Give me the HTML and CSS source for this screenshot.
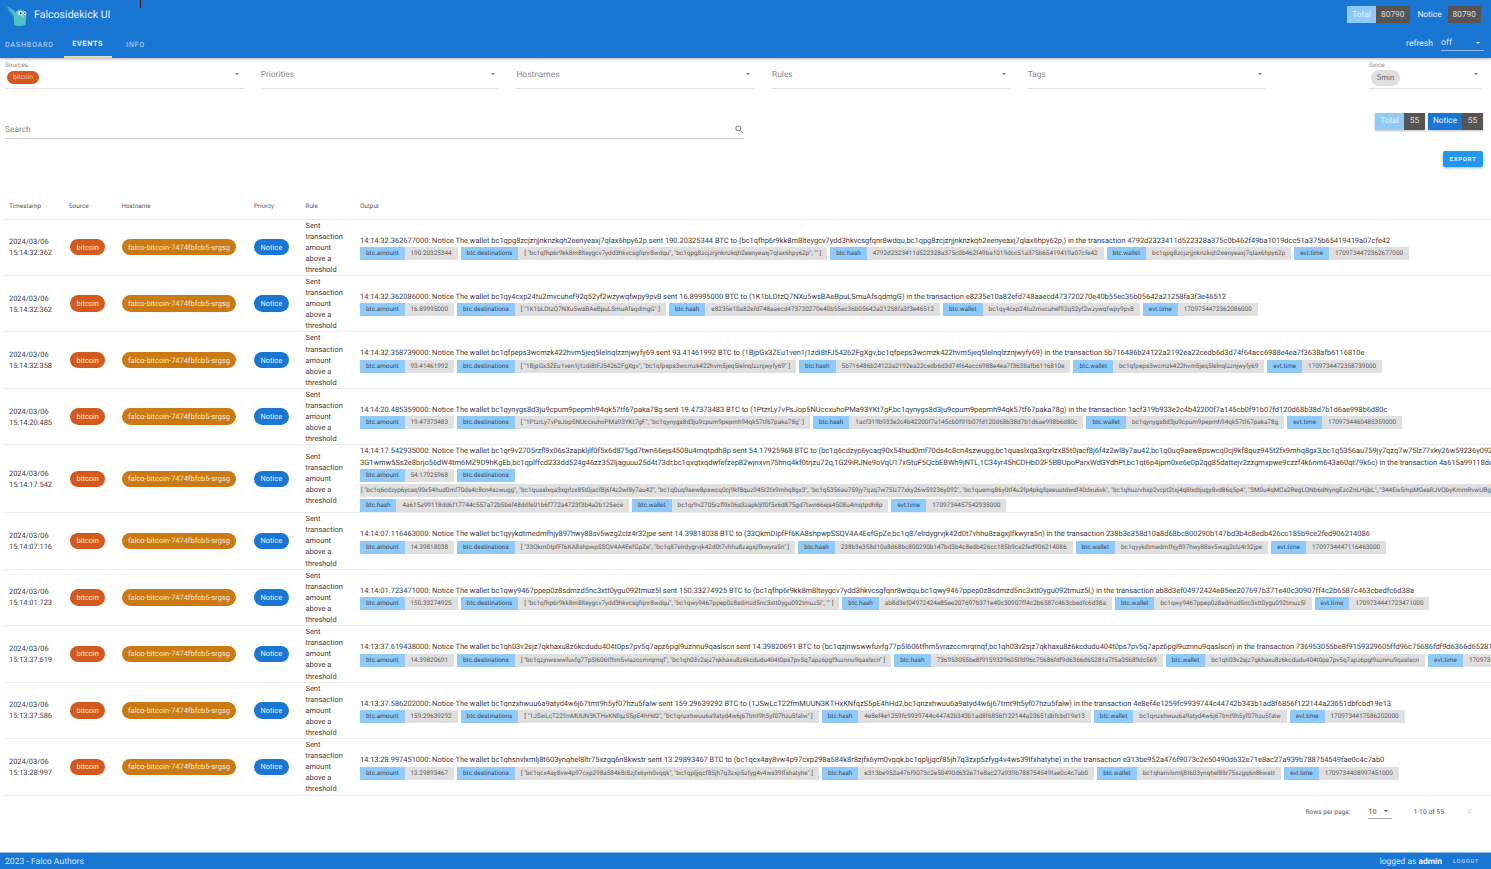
FILE: index.html
```html
<!DOCTYPE html>
<html lang="en">
<head>
<meta charset="utf-8">
<title>Falcosidekick UI</title>
<link rel="stylesheet" href="styles.css">
</head>
<body>
<div class="app">
  <i class="cursor-mark"></i>
  <header class="topbar">
    <div class="bar-row">
      <svg class="logo" viewBox="0 0 28 28" aria-hidden="true">
        <path d="M0 1 L13 9 L13 20 Q6 12 0 1Z" fill="#2a8fb5"/>
        <path d="M4 4 L13 10 L13 17 Q8 11 4 4Z" fill="#46bcd3"/>
        <path d="M12 26 Q11 16 13 12 Q15 7 20 8 Q26 9 26 15 L25 25 Q19 28 12 26Z" fill="#4fc4cc"/>
        <circle cx="19" cy="12" r="2.6" fill="#e8f4f5"/><circle cx="24" cy="12" r="2.1" fill="#e8f4f5"/>
        <circle cx="19.5" cy="12" r="1.1" fill="#234"/><circle cx="24.3" cy="12" r=".9" fill="#234"/>
        <path d="M20.5 15 L23 15 L21.8 17.5Z" fill="#d9c48d"/>
      </svg>
      <span class="brand">Falcosidekick UI</span>
      <span class="grow"></span>
      <span class="count-group">
        <span class="count-key key-light">Total</span><span class="count-val val-wide">80790</span>
      </span>
      <span class="count-key key-plain">Notice</span><span class="count-val val-wide">80790</span>
    </div>
    <div class="bar-row tabs-row">
      <nav class="tabs">
        <a class="tab tab-first">DASHBOARD</a>
        <a class="tab tab-active">EVENTS</a>
        <a class="tab tab-last">INFO</a>
      </nav>
      <span class="grow"></span>
      <span class="refresh-label">refresh</span>
      <span class="refresh-select">off<i class="caret caret-white"></i></span>
    </div>
  </header>

  <main class="main">
    <section class="filters">
      <div class="field"><span class="mini-label">Sources</span><span class="chip-small">bitcoin</span><i class="caret"></i></div>
      <div class="field"><span class="placeholder">Priorities</span><i class="caret"></i></div>
      <div class="field"><span class="placeholder">Hostnames</span><i class="caret"></i></div>
      <div class="field"><span class="placeholder">Rules</span><i class="caret"></i></div>
      <div class="field"><span class="placeholder">Tags</span><i class="caret"></i></div>
      <div class="field field-since"><span class="mini-label">Since</span><span class="chip-grey">5min</span><i class="caret"></i></div>
    </section>

    <section class="search-row">
      <div class="search">
        <span class="search-text">Search</span>
        <svg class="search-icon" viewBox="0 0 24 24" aria-hidden="true"><path d="M9.5 3A6.5 6.5 0 0 1 16 9.5c0 1.61-.59 3.09-1.56 4.23l.27.27h.79l5 5-1.5 1.5-5-5v-.79l-.27-.27A6.516 6.516 0 0 1 9.5 16 6.5 6.5 0 0 1 3 9.5 6.5 6.5 0 0 1 9.5 3m0 2C7 5 5 7 5 9.5S7 14 9.5 14 14 12 14 9.5 12 5 9.5 5z"/></svg>
      </div>
      <span class="grow"></span>
      <span class="count-group raised"><span class="count-key key-light">Total</span><span class="count-val">55</span></span>
      <span class="count-group raised"><span class="count-key key-blue">Notice</span><span class="count-val">55</span></span>
    </section>

    <div class="export-row"><button class="export">EXPORT</button></div>

    <div class="table-clip">
      <table class="events">
        <colgroup><col class="c-time"><col class="c-src"><col class="c-host"><col class="c-prio"><col class="c-rule"><col class="c-out"></colgroup>
        <thead>
          <tr><th>Timestamp</th><th>Source</th><th>Hostname</th><th>Priority</th><th>Rule</th><th>Output</th></tr>
        </thead>
        <tbody>
          <tr>
            <td>2024/03/06<br>15:14:32:362</td><td><span class="chip c-bitcoin">bitcoin</span></td><td><span class="chip c-hostn">falco-bitcoin-7474fbfcb5-srgsg</span></td><td><span class="chip c-notice">Notice</span></td><td class="rule">Sent transaction amount above a threshold</td>
            <td><div class="line">14:14:32.362677000: Notice The wallet bc1qpg8zcjzrjjnknzkqh2eenyeaxj7qlax6hpy62p sent 190.20325344 BTC to (bc1qfhp6r9kk8m8lteygcv7ydd3hkvcsgfqnr8wdqu,bc1qpg8zcjzrjjnknzkqh2eenyeaxj7qlax6hpy62p,) in the transaction 4792d2323411d522328a375c0b462f49ba1019dcc51a375b65419419a07cfe42</div>
            <div class="tags"><span class="tag"><b>btc.amount</b><em>190.20325344</em></span><span class="tag"><b>btc.destinations</b><em>[ "bc1qfhp6r9kk8m8lteygcv7ydd3hkvcsgfqnr8wdqu", "bc1qpg8zcjzrjjnknzkqh2eenyeaxj7qlax6hpy62p", "" ]</em></span><span class="tag"><b>btc.hash</b><em>4792d2323411d522328a375c0b462f49ba1019dcc51a375b65419419a07cfe42</em></span><span class="tag"><b>btc.wallet</b><em>bc1qpg8zcjzrjjnknzkqh2eenyeaxj7qlax6hpy62p</em></span><span class="tag"><b>evt.time</b><em>1709734472362677000</em></span></div></td>
          </tr>
          <tr>
            <td>2024/03/06<br>15:14:32:362</td><td><span class="chip c-bitcoin">bitcoin</span></td><td><span class="chip c-hostn">falco-bitcoin-7474fbfcb5-srgsg</span></td><td><span class="chip c-notice">Notice</span></td><td class="rule">Sent transaction amount above a threshold</td>
            <td><div class="line">14:14:32.362086000: Notice The wallet bc1qy4cxp24tu2mvcuhef92q52yf2wzywqfwpy9pv8 sent 16.89995000 BTC to (1K1bLDtzQ7NXu5wsBAeBpuLSmuAfsqdmgG) in the transaction e8235e10a82efd748aaecd473720270e40b55ec36b05642a21258fa3f3e46512</div>
            <div class="tags"><span class="tag"><b>btc.amount</b><em>16.89995000</em></span><span class="tag"><b>btc.destinations</b><em>[ "1K1bLDtzQ7NXu5wsBAeBpuLSmuAfsqdmgG" ]</em></span><span class="tag"><b>btc.hash</b><em>e8235e10a82efd748aaecd473720270e40b55ec36b05642a21258fa3f3e46512</em></span><span class="tag"><b>btc.wallet</b><em>bc1qy4cxp24tu2mvcuhef92q52yf2wzywqfwpy9pv8</em></span><span class="tag"><b>evt.time</b><em>1709734472362086000</em></span></div></td>
          </tr>
          <tr>
            <td>2024/03/06<br>15:14:32:358</td><td><span class="chip c-bitcoin">bitcoin</span></td><td><span class="chip c-hostn">falco-bitcoin-7474fbfcb5-srgsg</span></td><td><span class="chip c-notice">Notice</span></td><td class="rule">Sent transaction amount above a threshold</td>
            <td><div class="line">14:14:32.358739000: Notice The wallet bc1qfpeps3wcmzk422hvm5jeq5lelnqlzznjwyfy69 sent 93.41461992 BTC to (1BjpGx3ZEu1ven1j1zdi8tFJ54262FgXgv,bc1qfpeps3wcmzk422hvm5jeq5lelnqlzznjwyfy69) in the transaction 5b716486b24122a2192ea22cedb6d3d74f64acc6988e4ea7f3638afb6116810e</div>
            <div class="tags"><span class="tag"><b>btc.amount</b><em>93.41461992</em></span><span class="tag"><b>btc.destinations</b><em>[ "1BjpGx3ZEu1ven1j1zdi8tFJ54262FgXgv", "bc1qfpeps3wcmzk422hvm5jeq5lelnqlzznjwyfy69" ]</em></span><span class="tag"><b>btc.hash</b><em>5b716486b24122a2192ea22cedb6d3d74f64acc6988e4ea7f3638afb6116810e</em></span><span class="tag"><b>btc.wallet</b><em>bc1qfpeps3wcmzk422hvm5jeq5lelnqlzznjwyfy69</em></span><span class="tag"><b>evt.time</b><em>1709734472358739000</em></span></div></td>
          </tr>
          <tr>
            <td>2024/03/06<br>15:14:20:485</td><td><span class="chip c-bitcoin">bitcoin</span></td><td><span class="chip c-hostn">falco-bitcoin-7474fbfcb5-srgsg</span></td><td><span class="chip c-notice">Notice</span></td><td class="rule">Sent transaction amount above a threshold</td>
            <td><div class="line">14:14:20.485359000: Notice The wallet bc1qynygs8d3ju9cpum9pepmh94qk57tf67paka78g sent 19.47373483 BTC to (1PtzrLy7vPsJop5NUccxuhoPMa93YKt7gF,bc1qynygs8d3ju9cpum9pepmh94qk57tf67paka78g) in the transaction 1acf319b933e2c4b42200f7a145cb0f91b07fd120d68b38d7b1d6ae998b6d80c</div>
            <div class="tags"><span class="tag"><b>btc.amount</b><em>19.47373483</em></span><span class="tag"><b>btc.destinations</b><em>[ "1PtzrLy7vPsJop5NUccxuhoPMa93YKt7gF", "bc1qynygs8d3ju9cpum9pepmh94qk57tf67paka78g" ]</em></span><span class="tag"><b>btc.hash</b><em>1acf319b933e2c4b42200f7a145cb0f91b07fd120d68b38d7b1d6ae998b6d80c</em></span><span class="tag"><b>btc.wallet</b><em>bc1qynygs8d3ju9cpum9pepmh94qk57tf67paka78g</em></span><span class="tag"><b>evt.time</b><em>1709734460485359000</em></span></div></td>
          </tr>
          <tr>
            <td>2024/03/06<br>15:14:17:542</td><td><span class="chip c-bitcoin">bitcoin</span></td><td><span class="chip c-hostn">falco-bitcoin-7474fbfcb5-srgsg</span></td><td><span class="chip c-notice">Notice</span></td><td class="rule">Sent transaction amount above a threshold</td>
            <td><div class="line">14:14:17.542935000: Notice The wallet bc1qr9v2705rzfl9x06s3zapkljlf0f5x6d875gd7twn66ejs4508u4mqtpdh8p sent 54.17925968 BTC to (bc1q6cdzyp6ycaq90x54hud0mf70ds4c8cn4szwugg,bc1quaslxqa3xgrlzx85t0jacf8j6f4z2wl8y7au42,bc1q0uq9aew8pswcq0cj9kf8quz945t2fx9mhq8gx3,bc1q5356au759jy7qzq7w75lz77xky26w59236y092,<br>3G1wmw5Ss2e8brjo56dW4tm6MZ9D9hKgEb,bc1qplffcd233dd524g46zz352ljaguuu25d4t73dr,bc1qxqtxqdwfefzep82wjnxvn75hnq4kf0trjzu72q,1G29iRJNe9oVqU17xGtuF5QcbEBWh9jNTL,1C34yr45hCDHbD2F5BBUpoParxWdGYdhPt,bc1qt6p4jpm0xe6e0p2qg85dattejv2zzgmxpwe9czzf4k6nm643a60qt79k6c) in the transaction 4a615a99118dd6f17744c557a72b5bef48ddfe01b6f772a4723f3b4a2b125ece</div>
            <div class="tags"><span class="tag"><b>btc.amount</b><em>54.17925968</em></span><span class="tag"><b>btc.destinations</b></span><span class="tag"><em class="flush">[ "bc1q6cdzyp6ycaq90x54hud0mf70ds4c8cn4szwugg", "bc1quaslxqa3xgrlzx85t0jacf8j6f4z2wl8y7au42", "bc1q0uq9aew8pswcq0cj9kf8quz945t2fx9mhq8gx3", "bc1q5356au759jy7qzq7w75lz77xky26w59236y092", "bc1quemg86y0tf4u2fp4pkgfqeeuutdwdf40dxu6vk", "bc1qhuzrvhxp2vcpt2txj4q8lxdtjugy8vd86q5p4", "3M0u4qMCa2RegLQNb6dNyngEzcZnLHijbL", "344Ew5mpMGesRJVQbyKmmRvwUBgLqXqsYh", "3G1wmw5Ss2e8brjo56dW4tm6MZ9D9hKgEb", "1G29iRJNe9oVqU17xGtuF5QcbEBWh9jNTL" ]</em></span><span class="tag"><b>btc.hash</b><em>4a615a99118dd6f17744c557a72b5bef48ddfe01b6f772a4723f3b4a2b125ece</em></span><span class="tag"><b>btc.wallet</b><em>bc1qr9v2705rzfl9x06s3zapkljlf0f5x6d875gd7twn66ejs4508u4mqtpdh8p</em></span><span class="tag"><b>evt.time</b><em>1709734457542935000</em></span></div></td>
          </tr>
          <tr>
            <td>2024/03/06<br>15:14:07:116</td><td><span class="chip c-bitcoin">bitcoin</span></td><td><span class="chip c-hostn">falco-bitcoin-7474fbfcb5-srgsg</span></td><td><span class="chip c-notice">Notice</span></td><td class="rule">Sent transaction amount above a threshold</td>
            <td><div class="line">14:14:07.116463000: Notice The wallet bc1qyykdtmedmfhjy897hwy88sv5wzg2clz4r32jpe sent 14.39818038 BTC to (33QkmDIpfFf6KA8shpwpSSQV4A4EefGpZe,bc1q87elrdygrvjk42d0t7vhhu8zagxjlfkwyra5n) in the transaction 238b3e358d10a8d68bc800290b147bd3b4c8edb426cc185b9ce2fed906214086</div>
            <div class="tags"><span class="tag"><b>btc.amount</b><em>14.39818038</em></span><span class="tag"><b>btc.destinations</b><em>[ "33QkmDIpfFf6KA8shpwpSSQV4A4EefGpZe", "bc1q87elrdygrvjk42d0t7vhhu8zagxjlfkwyra5n" ]</em></span><span class="tag"><b>btc.hash</b><em>238b3e358d10a8d68bc800290b147bd3b4c8edb426cc185b9ce2fed906214086</em></span><span class="tag"><b>btc.wallet</b><em>bc1qyykdtmedmfhjy897hwy88sv5wzg2clz4r32jpe</em></span><span class="tag"><b>evt.time</b><em>1709734447116463000</em></span></div></td>
          </tr>
          <tr>
            <td>2024/03/06<br>15:14:01:723</td><td><span class="chip c-bitcoin">bitcoin</span></td><td><span class="chip c-hostn">falco-bitcoin-7474fbfcb5-srgsg</span></td><td><span class="chip c-notice">Notice</span></td><td class="rule">Sent transaction amount above a threshold</td>
            <td><div class="line">14:14:01.723471000: Notice The wallet bc1qwy9467ppep0z8sdmzd5nc3xtt0ygu092tmuz5l sent 150.33274925 BTC to (bc1qfhp6r9kk8m8lteygcv7ydd3hkvcsgfqnr8wdqu,bc1qwy9467ppep0z8sdmzd5nc3xtt0ygu092tmuz5l,) in the transaction ab8d3ef04972424e85ee207697b371e40c30907ff4c2b6587c463cbedfc6d38a</div>
            <div class="tags"><span class="tag"><b>btc.amount</b><em>150.33274925</em></span><span class="tag"><b>btc.destinations</b><em>[ "bc1qfhp6r9kk8m8lteygcv7ydd3hkvcsgfqnr8wdqu", "bc1qwy9467ppep0z8sdmzd5nc3xtt0ygu092tmuz5l", "" ]</em></span><span class="tag"><b>btc.hash</b><em>ab8d3ef04972424e85ee207697b371e40c30907ff4c2b6587c463cbedfc6d38a</em></span><span class="tag"><b>btc.wallet</b><em>bc1qwy9467ppep0z8sdmzd5nc3xtt0ygu092tmuz5l</em></span><span class="tag"><b>evt.time</b><em>1709734441723471000</em></span></div></td>
          </tr>
          <tr>
            <td>2024/03/06<br>15:13:37:619</td><td><span class="chip c-bitcoin">bitcoin</span></td><td><span class="chip c-hostn">falco-bitcoin-7474fbfcb5-srgsg</span></td><td><span class="chip c-notice">Notice</span></td><td class="rule">Sent transaction amount above a threshold</td>
            <td><div class="line">14:13:37.619438000: Notice The wallet bc1qh03v2sjz7qkhaxu8z6kcdudu404t0ps7pv5q7apz6pgl9uznnu9qaslscn sent 14.39820691 BTC to (bc1qzjnwswwfuvfg77p5l606tfhm5vrazccmrqrnqf,bc1qh03v2sjz7qkhaxu8z6kcdudu404t0ps7pv5q7apz6pgl9uznnu9qaslscn) in the transaction 736953055be8f9159329605ffd96c75686fdf9d6366d65281a7f5a05689dc569</div>
            <div class="tags"><span class="tag"><b>btc.amount</b><em>14.39820691</em></span><span class="tag"><b>btc.destinations</b><em>[ "bc1qzjnwswwfuvfg77p5l606tfhm5vrazccmrqrnqf", "bc1qh03v2sjz7qkhaxu8z6kcdudu404t0ps7pv5q7apz6pgl9uznnu9qaslscn" ]</em></span><span class="tag"><b>btc.hash</b><em>736953055be8f9159329605ffd96c75686fdf9d6366d65281a7f5a05689dc569</em></span><span class="tag"><b>btc.wallet</b><em>bc1qh03v2sjz7qkhaxu8z6kcdudu404t0ps7pv5q7apz6pgl9uznnu9qaslscn</em></span><span class="tag"><b>evt.time</b><em>1709734417619438000</em></span></div></td>
          </tr>
          <tr>
            <td>2024/03/06<br>15:13:37:586</td><td><span class="chip c-bitcoin">bitcoin</span></td><td><span class="chip c-hostn">falco-bitcoin-7474fbfcb5-srgsg</span></td><td><span class="chip c-notice">Notice</span></td><td class="rule">Sent transaction amount above a threshold</td>
            <td><div class="line">14:13:37.586202000: Notice The wallet bc1qnzxhwuu6a9atyd4w6j67tmt9h5yf07hzu5falw sent 159.29639292 BTC to (1JSwLcT22fmMUUN3KTHxKNfqzS5pE4hHd2,bc1qnzxhwuu6a9atyd4w6j67tmt9h5yf07hzu5falw) in the transaction 4e8ef4e1259fc9939744c44742b343b1ad8f6856f122144a23651dbfcbd19e13</div>
            <div class="tags"><span class="tag"><b>btc.amount</b><em>159.29639292</em></span><span class="tag"><b>btc.destinations</b><em>[ "1JSwLcT22fmMUUN3KTHxKNfqzS5pE4hHd2", "bc1qnzxhwuu6a9atyd4w6j67tmt9h5yf07hzu5falw" ]</em></span><span class="tag"><b>btc.hash</b><em>4e8ef4e1259fc9939744c44742b343b1ad8f6856f122144a23651dbfcbd19e13</em></span><span class="tag"><b>btc.wallet</b><em>bc1qnzxhwuu6a9atyd4w6j67tmt9h5yf07hzu5falw</em></span><span class="tag"><b>evt.time</b><em>1709734417586202000</em></span></div></td>
          </tr>
          <tr>
            <td>2024/03/06<br>15:13:28:997</td><td><span class="chip c-bitcoin">bitcoin</span></td><td><span class="chip c-hostn">falco-bitcoin-7474fbfcb5-srgsg</span></td><td><span class="chip c-notice">Notice</span></td><td class="rule">Sent transaction amount above a threshold</td>
            <td><div class="line">14:13:28.997451000: Notice The wallet bc1qhsnvlxmlj8t603ynqhel8ltr75xzgq6n8kwstr sent 13.29893467 BTC to (bc1qcx4ay8vw4p97cxp298a584k8r8zjfx6ym0vqqk,bc1qpljjqcf85jh7q3zxp5zfyg4v4ws39lfxhatyhe) in the transaction e313be952a476f9073c2e50490d632e71e8ac27a939b788754549fae0c4c7ab0</div>
            <div class="tags"><span class="tag"><b>btc.amount</b><em>13.29893467</em></span><span class="tag"><b>btc.destinations</b><em>[ "bc1qcx4ay8vw4p97cxp298a584k8r8zjfx6ym0vqqk", "bc1qpljjqcf85jh7q3zxp5zfyg4v4ws39lfxhatyhe" ]</em></span><span class="tag"><b>btc.hash</b><em>e313be952a476f9073c2e50490d632e71e8ac27a939b788754549fae0c4c7ab0</em></span><span class="tag"><b>btc.wallet</b><em>bc1qhsnvlxmlj8t603ynqhel8ltr75xzgq6n8kwstr</em></span><span class="tag"><b>evt.time</b><em>1709734408997451000</em></span></div></td>
          </tr>
        </tbody>
      </table>
    </div>

    <div class="pagination">
      <span>Rows per page:</span>
      <span class="page-select">10<i class="caret caret-dark"></i></span>
      <span class="page-range">1-10 of 55</span>
      <svg class="chev" viewBox="0 0 24 24" aria-hidden="true"><path d="M15.4 7.4 14 6l-6 6 6 6 1.4-1.4L10.8 12z"/></svg>
    </div>
  </main>

  <footer class="footer">
    <span>2023 - Falco Authors</span>
    <span class="grow"></span>
    <span class="logged">logged as <strong>admin</strong></span>
    <span class="logout">LOGOUT</span>
  </footer>
</div>
</body>
</html>
```
FILE: styles.css
```css
* { box-sizing: border-box; }
html, body { margin: 0; height: 100%; overflow: hidden; }
body { font-family: Roboto, "Liberation Sans", sans-serif; color: #333; background: #fff; text-rendering: geometricPrecision; }
.app { height: 869px; display: flex; flex-direction: column; position: relative; }
.grow { flex: 1; }
.cursor-mark { position: absolute; left: 139.5px; top: 0; width: 1.5px; height: 8px; background: #111; z-index: 5; }

.topbar { background: #1976d2; height: 57.5px; color: #fff; box-shadow: 0 1px 3px rgba(0,0,0,.3); position: relative; z-index: 2; flex: none; }
.bar-row { display: flex; align-items: center; height: 29px; padding-right: 10px; }
.tabs-row { height: 28.5px; align-items: stretch; padding-right: 7px; }
.logo { width: 24px; height: 24px; margin: 0 0 0 4px; flex: none; }
.brand { font-size: 10.6px; margin-left: 6px; color: #e8f1fb; }
.count-group { display: inline-flex; }
.count-key, .count-val { display: inline-flex; align-items: center; justify-content: center; height: 17px; font-size: 8.3px; }
.count-val { background: #555; color: #ddd; width: 21px; }
.val-wide { width: 33.5px; }
.key-light { background: #90caf9; color: #e6f3fe; width: 29px; }
.key-blue { background: #1976d2; color: #e8f1fb; width: 34px; }
.key-plain { color: #e8f1fb; margin: 0 7px 0 9px; width: 22px; }
.tabs { display: flex; }
.tab { display: flex; align-items: center; justify-content: center; font-size: 7.3px; font-weight: 500; letter-spacing: .65px; color: rgba(255,255,255,.6); height: 28.5px; padding-top: 2px; }
.tab-first { width: 63.5px; justify-content: flex-start; padding-left: 5px; }
.tab-active { width: 48.5px; color: #e8f1fb; border-bottom: 2px solid #d5d8dc; font-weight: 700; }
.tab-last { width: 47px; }
.refresh-label { font-size: 8.6px; align-self: center; color: #e8f1fb; margin: 2px 8px 0 0; }
.refresh-select { position: relative; width: 43px; height: 14px; align-self: center; margin-top: 2px; font-size: 8.6px; color: #dbe9f8; border-bottom: 1px solid #8fbbe8; line-height: 12px; }
.refresh-select .caret { position: absolute; right: 4px; top: 5px; }

.caret { display: inline-block; width: 0; height: 0; border-left: 2.5px solid transparent; border-right: 2.5px solid transparent; border-top: 2.5px solid #777; }
.caret-white { border-top-color: #fff; }
.caret-dark { border-top-color: #555; }

.main { flex: 1; min-height: 0; }
.filters { display: flex; gap: 17.2px; padding: 0 9px 0 5px; height: 31.5px; }
.field { position: relative; width: 238.5px; height: 31.5px; border-bottom: 1.5px solid #e3e3e3; }
.field > .caret { position: absolute; right: 4.5px; top: 15.5px; }
.field-since { width: 113px; margin-left: auto; }
.placeholder { position: absolute; left: 0; top: 12px; font-size: 8.4px; color: #8a8a8a; }
.mini-label { position: absolute; left: 0; top: 3px; font-size: 6.4px; color: #8e8e8e; }
.chip-small { position: absolute; left: 2px; top: 13px; height: 13px; width: 32px; display: flex; align-items: center; justify-content: center; background: #d2591f; color: #f3c9ae; border-radius: 7px; font-size: 6.6px; }
.chip-grey { position: absolute; left: 2px; top: 12px; height: 16.5px; width: 29px; display: flex; align-items: center; justify-content: center; background: #e0e0e0; color: #666; border-radius: 9px; font-size: 7.8px; }

.search-row { display: flex; align-items: flex-start; padding: 23.5px 8px 0 5px; height: 50px; gap: 3px; }
.search { position: relative; width: 738.5px; height: 26px; border-bottom: 1px solid #cfcfcf; font-size: 8.4px; color: #8a8a8a; }
.search-text { position: absolute; left: 0; top: 12.5px; }
.search-icon { position: absolute; right: -1px; top: 11px; width: 11px; height: 11px; fill: #757575; }
.raised { box-shadow: 0 1px 2px rgba(0,0,0,.25); }

.export-row { display: flex; justify-content: flex-end; padding-right: 8px; margin-top: 12px; }
.export { width: 40px; height: 15.5px; padding: 0; border: 0; border-radius: 2px; background: #2196f3; color: #e3f2fd; font: 700 6.2px Roboto, "Liberation Sans", sans-serif; letter-spacing: .6px; box-shadow: 0 1px 3px rgba(0,0,0,.3); }

.table-clip { overflow: hidden; margin-top: 26.5px; }
.events { table-layout: fixed; width: 1701px; margin-left: 4px; border-collapse: separate; border-spacing: 0; font-size: 7.45px; color: #3d3d3d; }
.c-time { width: 60.5px; } .c-src { width: 52.5px; } .c-host { width: 132.5px; } .c-prio { width: 51.5px; } .c-rule { width: 54.5px; } .c-out { width: 1349.5px; }
.events th { height: 26.5px; padding: 0 0 0 4.5px; text-align: left; font-size: 6.3px; font-weight: 400; color: #555; border-bottom: 1px solid #ececec; vertical-align: middle; }
.events th:first-child { padding-left: 5px; }
.events td { padding: 0 0 0 4.5px; border-bottom: 1px solid #ececec; vertical-align: middle; line-height: 11.1px; }
.events td:first-child { padding-left: 5px; }
.events td:nth-child(2) { padding-left: 5.5px; }
.events td.rule { padding-right: 6px; }
.chip { display: inline-flex; align-items: center; justify-content: center; height: 16.5px; padding: 0 6.5px; border-radius: 9px; color: #fbe7d6; white-space: nowrap; box-shadow: 0 0 0 .5px rgba(255,255,255,.6); }
.c-bitcoin { background: #d2591f; }
.c-hostn { background: #c97a12; }
.c-notice { background: #1976d2; color: #e8f1fb; }
.line { white-space: nowrap; line-height: 11.4px; font-size: 7.46px; }
.tags { display: flex; flex-wrap: wrap; gap: 2px 3px; width: 1240px; margin-top: 1px; }
.tag { display: inline-flex; flex: none; height: 13px; font-size: 6.38px; line-height: 13px; white-space: nowrap; }
.tag b { font-weight: 400; background: #90caf9; color: #2f4a63; padding: 0 6px; }
.tag em { font-style: normal; background: #e0e0e0; color: #5b5b5b; padding: 0 6px; }
.tag em.flush { padding: 0 0 0 1px; }

.pagination { display: flex; align-items: center; justify-content: flex-end; height: 32px; font-size: 6.6px; color: #555; padding-right: 17px; }
.page-select { position: relative; width: 24px; height: 14px; line-height: 13px; margin-left: 18px; font-size: 7.2px; border-bottom: 1px solid #aaa; }
.page-select .caret { position: absolute; left: 16px; top: 5px; }
.page-range { margin: 0 20px 0 21px; font-size: 6.8px; }
.chev { width: 11px; height: 11px; fill: #c4c4c4; margin-right: -1px; }

.footer { background: #1976d2; height: 17px; flex: none; display: flex; align-items: center; padding: 1px 12px 0 5px; font-size: 8.6px; color: #d6e6f7; border-top: 1px solid #90bce8; }
.logged { font-size: 8.45px; }
.logged strong { color: #eef5fc; font-weight: 700; }
.logout { font-size: 5.7px; font-weight: 500; letter-spacing: .7px; margin-left: 11px; color: #b9d4f0; }
```
